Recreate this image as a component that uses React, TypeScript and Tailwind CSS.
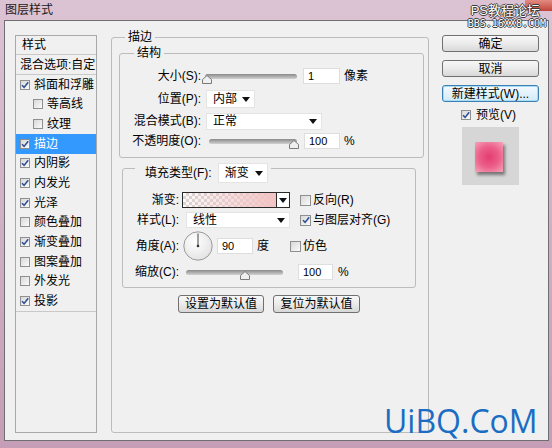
import React from "react";

const listItems = [
  { t: "斜面和浮雕", on: true },
  { t: "等高线", on: false, sub: true },
  { t: "纹理", on: false, sub: true },
  { t: "描边", on: true, sel: true },
  { t: "内阴影", on: true },
  { t: "内发光", on: true },
  { t: "光泽", on: true },
  { t: "颜色叠加", on: false },
  { t: "渐变叠加", on: true },
  { t: "图案叠加", on: false },
  { t: "外发光", on: false },
  { t: "投影", on: true },
];

function Check({ on, big }: { on: boolean; big?: boolean }) {
  return (
    <span
      className={`inline-flex shrink-0 items-center justify-center border border-[#8e8f8f] bg-gradient-to-br from-[#d8d8d8] to-[#fbfbfb] ${
        big ? "w-[11px] h-[11px]" : "w-[10px] h-[10px]"
      }`}
    >
      {on && (
        <svg width="8" height="8" viewBox="0 0 8 8">
          <path d="M1 4.3 L3.1 6.4 L7.2 1.2" fill="none" stroke="#2f4f95" strokeWidth="1.6" />
        </svg>
      )}
    </span>
  );
}

function Arrow() {
  return (
    <svg width="8" height="5" viewBox="0 0 8 5" className="shrink-0">
      <path d="M0 0 H8 L4 5 Z" fill="#111" />
    </svg>
  );
}

function Select({ w, h, text }: { w: string; h: string; text: string }) {
  return (
    <div className={`${w} ${h} flex items-center justify-between bg-white border border-[#e4e4e4] pl-[6px] pr-[4px]`}>
      <span>{text}</span>
      <Arrow />
    </div>
  );
}

function Input({ w, h = "h-[16px]", value }: { w: string; h?: string; value: string }) {
  return (
    <div className={`${w} ${h} flex items-center bg-white border border-[#dedede] pl-[4px] text-[11px]`}>
      {value}
    </div>
  );
}

function Slider({ w, pos }: { w: string; pos: number }) {
  return (
    <div className={`${w} relative h-[5px] rounded-full bg-gradient-to-b from-[#8a8a8a] to-[#d2d2d2]`}>
      <svg
        width="10"
        height="9"
        viewBox="0 0 10 9"
        className="absolute top-[1px]"
        style={{ left: `calc(${pos}% - 5px)` }}
      >
        <path d="M5 0.5 L9.5 4.5 L9.5 8.5 L0.5 8.5 L0.5 4.5 Z" fill="#efefef" stroke="#7a7a7a" />
      </svg>
    </div>
  );
}

function Btn({ w, h, children, focus }: { w: string; h: string; children: React.ReactNode; focus?: boolean }) {
  return (
    <div
      className={`${w} ${h} flex items-center justify-center rounded-[3px] border text-[12px] ${
        focus
          ? "border-[#3c7fb1] bg-gradient-to-b from-[#f3fafe] to-[#d2eaf8] shadow-[inset_0_0_0_1px_#a8dcf6]"
          : "border-[#707070] bg-gradient-to-b from-[#f7f7f7] via-[#ebebeb] to-[#d8d8d8]"
      }`}
    >
      {children}
    </div>
  );
}

export default function App() {
  return (
    <div className="relative w-[552px] h-[448px] overflow-hidden bg-gradient-to-b from-[#dcc3d3] to-[#c59db6] text-[12px] text-black font-['Liberation_Sans','Noto_Sans_CJK_SC',sans-serif]">
      {/* Title bar */}
      <div className="h-[20px] flex items-center pl-[5px] text-[#1b1b1b]">图层样式</div>

      {/* close button + forum watermark */}
      <div className="absolute top-0 right-0 w-[27px] h-[11px] rounded-bl-[4px] bg-gradient-to-b from-[#e38a82] to-[#c0443a]" />
      <div className="absolute top-[3px] right-[6px] flex flex-col items-end text-white [text-shadow:1px_0_#3a3a3a,-1px_0_#3a3a3a,0_1px_#3a3a3a,0_-1px_#3a3a3a]">
        <span className="text-[13px] leading-[15px] mr-[6px]">PS教程论坛</span>
        <span className="text-[10px] leading-[12px] font-['DejaVu_Sans_Mono',monospace]">BBS.16XX8.COM</span>
      </div>

      {/* Dialog body */}
      <div className="ml-[4px] w-[545px] h-[421px] border border-[#6f6f6f] bg-[#f0f0f0] flex items-start pl-[10px]">
        {/* Style list */}
        <div className="mt-[14px] w-[82px] h-[398px] border border-[#a9a9a9] bg-[#f0f0f0]">
          <div className="h-[19px] flex items-center pl-[6px] border-b border-[#c9c9c9]">样式</div>
          <div className="h-[20px] flex items-center pl-[4px] border-b border-[#c9c9c9] whitespace-nowrap">混合选项:自定</div>
          <div className="border-b border-[#c9c9c9]">
            {listItems.map((it) => (
              <div
                key={it.t}
                className={`h-[19.65px] flex items-center gap-[4px] ${it.sub ? "pl-[17px]" : "pl-[4px]"} ${
                  it.sel ? "bg-[#3399ff] text-white" : ""
                }`}
              >
                <Check on={it.on} />
                <span>{it.t}</span>
              </div>
            ))}
          </div>
        </div>

        {/* Stroke settings */}
        <fieldset className="ml-[14px] mt-[8px] w-[318px] h-[404px] border border-[#bcbcbc] rounded-[3px] pl-[7px]">
          <legend className="ml-[6px] px-[3px] leading-[16px]">描边</legend>

          <fieldset className="w-[305px] h-[113px] border border-[#bcbcbc] rounded-[3px]">
            <legend className="ml-[14px] px-[3px] leading-[16px]">结构</legend>

            <div className="mt-[6px] h-[18px] flex items-center">
              <span className="w-[81px] text-right">大小(S):</span>
              <div className="ml-[4px]">
                <Slider w="w-[92px]" pos={2} />
              </div>
              <div className="ml-[6px]">
                <Input w="w-[37px]" value="1" />
              </div>
              <span className="ml-[4px]">像素</span>
            </div>

            <div className="mt-[4px] h-[20px] flex items-center">
              <span className="w-[81px] text-right">位置(P):</span>
              <div className="ml-[5px]">
                <Select w="w-[49px]" h="h-[18px]" text="内部" />
              </div>
            </div>

            <div className="mt-[3px] h-[18px] flex items-center">
              <span className="w-[81px] text-right">混合模式(B):</span>
              <div className="ml-[5px]">
                <Select w="w-[116px]" h="h-[17px]" text="正常" />
              </div>
            </div>

            <div className="mt-[2px] h-[18px] flex items-center">
              <span className="w-[81px] text-right">不透明度(O):</span>
              <div className="ml-[8px]">
                <Slider w="w-[88px]" pos={97} />
              </div>
              <div className="ml-[7px]">
                <Input w="w-[36px]" value="100" />
              </div>
              <span className="ml-[4px]">%</span>
            </div>
          </fieldset>

          <fieldset className="ml-[3px] mt-[5px] w-[294px] h-[125px] border border-[#bcbcbc] rounded-[3px]">
            <legend className="ml-[12px] pl-[10px] pr-[3px] h-[10px]">
              <div className="flex items-start">
                <span className="leading-[20px]">填充类型(F):</span>
                <div className="ml-[6px]">
                  <Select w="w-[50px]" h="h-[20px]" text="渐变" />
                </div>
              </div>
            </legend>

            <div className="mt-[19px] h-[16px] flex items-center">
              <span className="w-[56px] text-right">渐变:</span>
              <div className="ml-[3px] w-[108px] h-[16px] flex border border-[#2a2a2a]">
                <div className="flex-1 [background:linear-gradient(to_right,#f2c4c41a,#f3c3c3),conic-gradient(#d6d6d6_25%,#fff_0_50%,#d6d6d6_0_75%,#fff_0)_0_0/6px_6px]" />
                <div className="w-[13px] flex items-center justify-center bg-white border-l border-[#2a2a2a]">
                  <Arrow />
                </div>
              </div>
              <div className="ml-[10px] flex items-center gap-[2px]">
                <Check on={false} big />
                <span>反向(R)</span>
              </div>
            </div>

            <div className="mt-[4px] h-[16px] flex items-center">
              <span className="w-[56px] text-right">样式(L):</span>
              <div className="ml-[7px]">
                <Select w="w-[104px]" h="h-[16px]" text="线性" />
              </div>
              <div className="ml-[10px] flex items-center gap-[2px]">
                <Check on big />
                <span>与图层对齐(G)</span>
              </div>
            </div>

            <div className="mt-[3px] h-[30px] flex items-center">
              <span className="w-[56px] text-right">角度(A):</span>
              <svg width="30" height="30" viewBox="0 0 30 30" className="ml-[4px] shrink-0">
                <defs>
                  <radialGradient id="dial" cx="40%" cy="35%" r="70%">
                    <stop offset="0" stopColor="#ffffff" />
                    <stop offset="1" stopColor="#e2e2e2" />
                  </radialGradient>
                </defs>
                <circle cx="15" cy="15" r="14.2" fill="url(#dial)" stroke="#9a9a9a" />
                <line x1="15" y1="15" x2="15" y2="2.5" stroke="#444" strokeWidth="1" />
                <circle cx="15" cy="15" r="1.3" fill="#333" />
              </svg>
              <div className="ml-[4px]">
                <Input w="w-[36px]" value="90" />
              </div>
              <span className="ml-[4px]">度</span>
              <div className="ml-[21px] flex items-center gap-[2px]">
                <Check on={false} big />
                <span>仿色</span>
              </div>
            </div>

            <div className="mt-[3px] h-[16px] flex items-center">
              <span className="w-[56px] text-right">缩放(C):</span>
              <div className="ml-[7px]">
                <Slider w="w-[97px]" pos={61} />
              </div>
              <div className="ml-[15px]">
                <Input w="w-[35px]" value="100" />
              </div>
              <span className="ml-[5px]">%</span>
            </div>
          </fieldset>

          <div className="mt-[7px] flex gap-[9px] pl-[59px]">
            <Btn w="w-[86px]" h="h-[18px]">设置为默认值</Btn>
            <Btn w="w-[87px]" h="h-[18px]">复位为默认值</Btn>
          </div>
        </fieldset>

        {/* Buttons column */}
        <div className="ml-[13px] mt-[14px] w-[97px] flex flex-col">
          <Btn w="w-[97px]" h="h-[17px]">确定</Btn>
          <div className="mt-[8px]">
            <Btn w="w-[97px]" h="h-[17px]">取消</Btn>
          </div>
          <div className="mt-[8px]">
            <Btn w="w-[97px]" h="h-[17px]" focus>
              新建样式(W)...
            </Btn>
          </div>
          <div className="mt-[4px] h-[18px] flex items-center gap-[5px] pl-[19px]">
            <Check on />
            <span>预览(V)</span>
          </div>
          <div className="mt-[3px] ml-[20px] w-[57px] h-[58px] bg-[#d6d6d6] pl-[13px] pt-[15px]">
            <div className="w-[28px] h-[30px] bg-[radial-gradient(circle,#e23d72_0%,#ec5f89_50%,#f6a4bb_100%)] shadow-[2px_3px_3px_rgba(0,0,0,0.45)]" />
          </div>
        </div>
      </div>

      {/* site watermark */}
      <div className="absolute left-[384px] top-[405px] text-[32px] leading-[32px] text-[#1b6dc3] font-['Open_Sans',sans-serif]">
        UiBQ.CoM
      </div>
    </div>
  );
}
